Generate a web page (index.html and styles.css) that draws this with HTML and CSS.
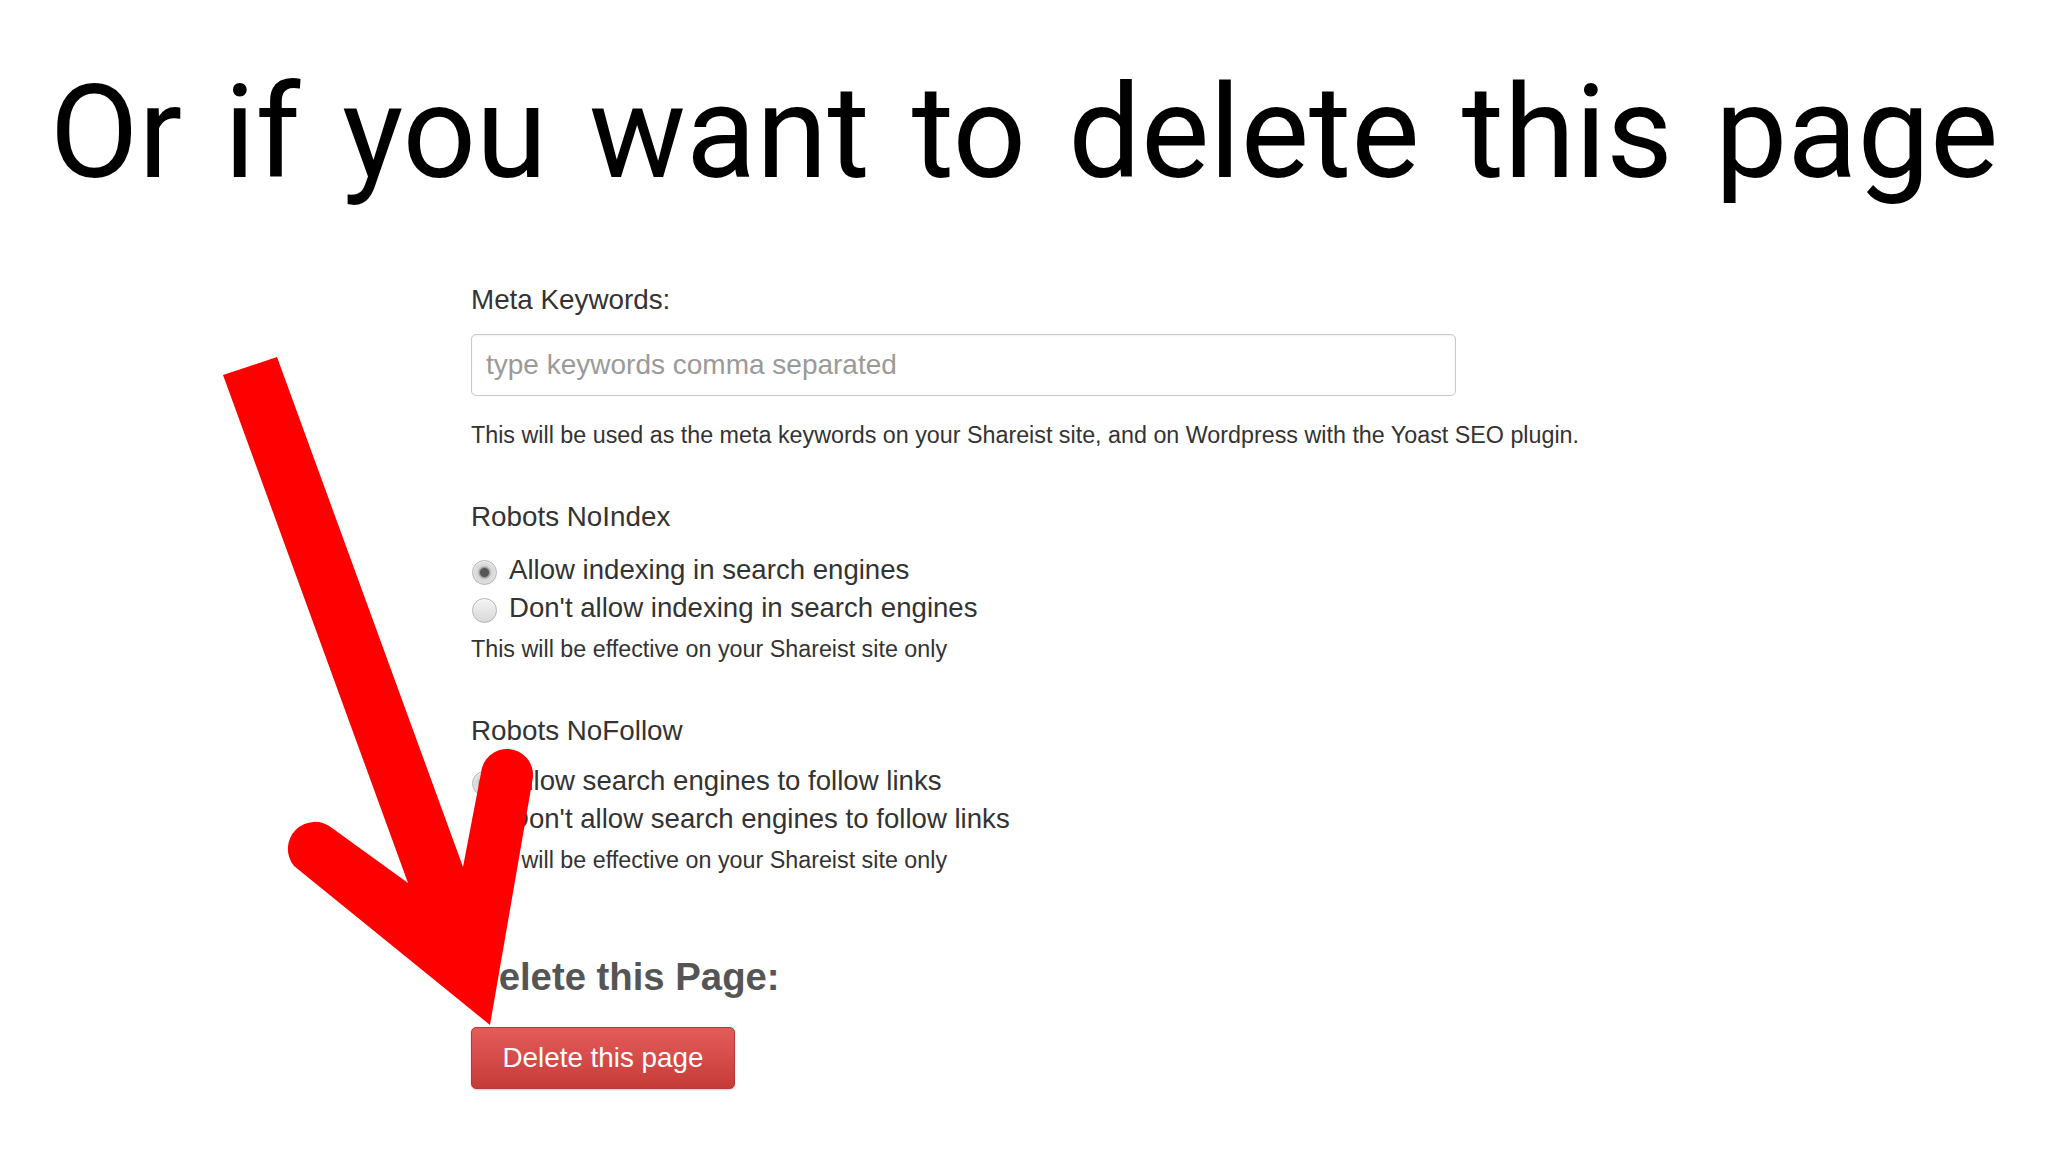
FILE: index.html
```html
<!DOCTYPE html>
<html lang="en">
<head>
<meta charset="utf-8">
<title>Delete this page</title>
<link rel="stylesheet" href="styles.css">
</head>
<body>
<div class="slide">
  <h1 class="title">Or if you want to delete this page</h1>
  <form class="form">
    <div class="label">Meta Keywords:</div>
    <input class="text-input" type="text" placeholder="type keywords comma separated">
    <p class="help">This will be used as the meta keywords on your Shareist site, and on Wordpress with the Yoast SEO plugin.</p>

    <div class="label section">Robots NoIndex</div>
    <div class="options">
      <label class="option"><input class="radio" type="radio" name="noindex" checked><span>Allow indexing in search engines</span></label>
      <label class="option"><input class="radio" type="radio" name="noindex"><span>Don't allow indexing in search engines</span></label>
    </div>
    <p class="help note">This will be effective on your Shareist site only</p>

    <div class="label section">Robots NoFollow</div>
    <div class="options tight">
      <label class="option"><input class="radio" type="radio" name="nofollow" checked><span>Allow search engines to follow links</span></label>
      <label class="option"><input class="radio" type="radio" name="nofollow"><span>Don't allow search engines to follow links</span></label>
    </div>
    <p class="help note">This will be effective on your Shareist site only</p>

    <h2 class="delete-title">Delete this Page:</h2>
    <button class="btn-delete" type="button">Delete this page</button>
  </form>

  <svg class="arrow" width="2048" height="1152" viewBox="0 0 2048 1152" aria-hidden="true">
    <path d="M223 375 L277 357 L463 867 L481 773 A26 26 0 0 1 533 777 L490 1025 L294 866 A27 27 0 0 1 332 828 L408 883 Z" fill="#ff0000"/>
  </svg>
</div>
</body>
</html>
```

FILE: styles.css
```css
html, body {
  margin: 0;
  padding: 0;
  background: #ffffff;
}

.slide {
  position: relative;
  width: 2048px;
  height: 1152px;
  overflow: hidden;
  background: #ffffff;
}

.title {
  margin: 0;
  padding-top: 68px;
  font-family: Roboto, "Noto Sans", sans-serif;
  font-weight: 400;
  font-size: 129px;
  line-height: 129px;
  word-spacing: 10px;
  text-align: center;
  color: #000000;
  white-space: nowrap;
}

.form {
  margin: 85px 0 0 471px;
  width: 1200px;
  font-family: "Liberation Sans", Arial, sans-serif;
  color: #333333;
}

.label {
  font-size: 27.8px;
  line-height: 36px;
  color: #333333;
}

.section {
  margin-top: 49px;
}

.text-input {
  display: block;
  box-sizing: border-box;
  margin-top: 16px;
  width: 985px;
  height: 62px;
  padding: 0 14px;
  border: 1px solid #c8c8c8;
  border-radius: 5px;
  box-shadow: inset 0 1px 2px rgba(0, 0, 0, 0.06);
  font-family: "Liberation Sans", Arial, sans-serif;
  font-size: 28px;
  color: #333333;
  background: #ffffff;
}

.text-input::placeholder {
  color: #9a9a9a;
}

.help {
  margin: 24px 0 0;
  font-size: 23.3px;
  line-height: 30px;
  color: #333333;
}

.help.note {
  margin-top: 7px;
}

.options {
  margin-top: 16px;
  display: flex;
  flex-direction: column;
}

.options.tight {
  margin-top: 13px;
}

.option {
  display: flex;
  align-items: center;
  gap: 12px;
  height: 38px;
  font-size: 27.6px;
  color: #333333;
}

.radio {
  appearance: none;
  -webkit-appearance: none;
  margin: 5px 0 0 1px;
  width: 25px;
  height: 25px;
  border-radius: 50%;
  border: 1px solid #b4b4b4;
  background: linear-gradient(#f4f4f4, #d9d9d9);
  box-shadow: inset 0 1px 1px rgba(255, 255, 255, 0.8);
  flex: none;
}

.radio:checked {
  background:
    radial-gradient(circle, #555555 0, #555555 4px, #9a9a9a 5px, #d8d8d8 7px, #e8e8e8 100%);
}

.delete-title {
  margin: 79px 0 0;
  font-size: 38.3px;
  line-height: 46px;
  font-weight: 700;
  color: #555555;
}

.btn-delete {
  display: block;
  margin-top: 27px;
  box-sizing: border-box;
  width: 264px;
  height: 62px;
  padding: 0;
  border: 1px solid #b83a38;
  border-radius: 5px;
  background: linear-gradient(#e45c5a, #c63b38);
  color: #ffffff;
  font-family: "Liberation Sans", Arial, sans-serif;
  font-size: 27.8px;
  box-shadow: 0 1px 2px rgba(0, 0, 0, 0.2);
}

.arrow {
  position: absolute;
  left: 0;
  top: 0;
  pointer-events: none;
}
```
